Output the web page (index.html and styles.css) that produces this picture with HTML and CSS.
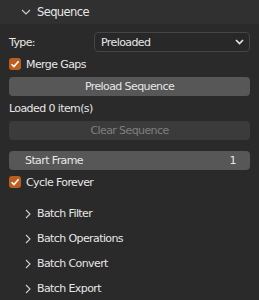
FILE: index.html
```html
<!DOCTYPE html>
<html lang="en">
<head>
    <meta charset="UTF-8">
    <title>Sequence</title>
    <link rel="stylesheet" href="styles.css">
</head>
<body>
    <!-- Panel header -->
    <div class="panel-header">
        <svg class="chev" width="10" height="6" viewBox="0 0 10 6"><path d="M1 1 L5 5 L9 1" fill="none" stroke="#cfcfcf" stroke-width="1.1"/></svg>
        <span>Sequence</span>
    </div>

    <div class="panel-body">
        <div class="row">
            <span class="label">Type:</span>
            <div class="dropdown">
                <span>Preloaded</span>
                <svg width="9" height="6" viewBox="0 0 9 6"><path d="M1 1 L4.5 4.5 L8 1" fill="none" stroke="#e6e6e6" stroke-width="1.6"/></svg>
            </div>
        </div>
        <div class="row">
            <span class="checkbox"><svg width="10" height="10" viewBox="0 0 10 10"><path d="M1.6 5.2 L4 7.6 L8.6 2.2" fill="none" stroke="#fff" stroke-width="1.6"/></svg></span>
            <span>Merge Gaps</span>
        </div>
        <div class="row">
            <div class="button">Preload Sequence</div>
        </div>
        <div class="row">
            <span>Loaded 0 item(s)</span>
        </div>
        <div class="row">
            <div class="button disabled">Clear Sequence</div>
        </div>
        <div class="row spaced">
            <div class="button number">
                <span>Start Frame</span>
                <span>1</span>
            </div>
        </div>
        <div class="row">
            <span class="checkbox"><svg width="10" height="10" viewBox="0 0 10 10"><path d="M1.6 5.2 L4 7.6 L8.6 2.2" fill="none" stroke="#fff" stroke-width="1.6"/></svg></span>
            <span>Cycle Forever</span>
        </div>
    </div>

    <!-- Sub panels -->
    <div class="subpanels">
        <div class="subpanel"><svg width="6" height="10" viewBox="0 0 6 10"><path d="M1 1 L5 5 L1 9" fill="none" stroke="#cfcfcf" stroke-width="1.1"/></svg><span>Batch Filter</span></div>
        <div class="subpanel"><svg width="6" height="10" viewBox="0 0 6 10"><path d="M1 1 L5 5 L1 9" fill="none" stroke="#cfcfcf" stroke-width="1.1"/></svg><span>Batch Operations</span></div>
        <div class="subpanel"><svg width="6" height="10" viewBox="0 0 6 10"><path d="M1 1 L5 5 L1 9" fill="none" stroke="#cfcfcf" stroke-width="1.1"/></svg><span>Batch Convert</span></div>
        <div class="subpanel"><svg width="6" height="10" viewBox="0 0 6 10"><path d="M1 1 L5 5 L1 9" fill="none" stroke="#cfcfcf" stroke-width="1.1"/></svg><span>Batch Export</span></div>
    </div>
</body>
</html>
```

FILE: styles.css
```css
body {
    margin: 0;
    background: #2a2a2a;
    color: #e6e6e6;
    font-family: "DejaVu Sans", sans-serif;
    font-size: 11px;
    letter-spacing: -0.6px;
    width: 259px;
    height: 300px;
    overflow: hidden;
}

.panel-header {
    height: 24px;
    background: #303030;
    display: flex;
    align-items: center;
    padding-left: 21px;
    gap: 6px;
    font-size: 11.5px;
}

.panel-body {
    padding: 8px 9px 0 9px;
    display: flex;
    flex-direction: column;
    gap: 2px;
}

.row {
    height: 20px;
    display: flex;
    align-items: center;
}

.row.spaced {
    margin-top: 8px;
}

.label {
    width: 85px;
}

.dropdown {
    flex: 1;
    height: 18px;
    border: 1px solid #454545;
    border-radius: 4px;
    background: #282828;
    display: flex;
    align-items: center;
    justify-content: space-between;
    padding: 0 5px 0 6px;
}

.checkbox {
    width: 12px;
    height: 12px;
    border-radius: 3px;
    background: #bd5e1f;
    display: flex;
    align-items: center;
    justify-content: center;
    margin-right: 5px;
}

.button {
    flex: 1;
    height: 19px;
    border-radius: 4px;
    background: #575757;
    display: flex;
    align-items: center;
    justify-content: center;
}

.button.disabled {
    background: #3b3b3b;
    color: #7f7f7f;
}

.button.number {
    justify-content: space-between;
    padding: 0 14px 0 16px;
}

/* Sub panels */
.subpanels {
    margin-top: 9px;
}

.subpanel {
    height: 25px;
    display: flex;
    align-items: center;
    padding-left: 25px;
    gap: 6px;
}
```
